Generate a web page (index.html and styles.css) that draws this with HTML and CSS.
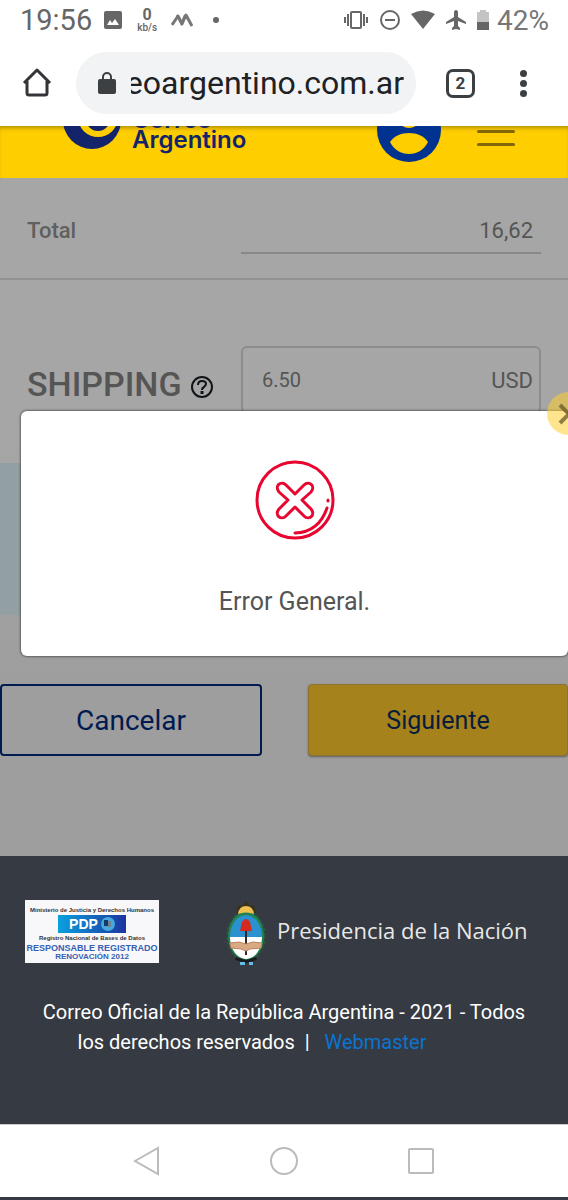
FILE: index.html
```html
<!DOCTYPE html>
<html lang="es">
<head>
<meta charset="UTF-8" />
<meta name="viewport" content="width=device-width, initial-scale=1" />
<title>Correo Argentino</title>
<link rel="stylesheet" href="styles.css">
</head>
<body>

  <div class="status">
    <span class="clock">19:56</span>
    <svg class="pic" width="18" height="18" viewBox="0 0 18 18"><rect width="18" height="18" rx="2" fill="#666"/><path d="M3 14l3-5 2 3 3-4 4 6z" fill="#fff"/></svg>
    <span class="speed"><b>0</b><small>kb/s</small></span>
    <svg class="wave" width="22" height="14" viewBox="0 0 22 14"><path d="M1 12L7 3l4 8 4-9 6 11" fill="none" stroke="#777" stroke-width="3" stroke-linejoin="round"/><path d="M6 2l5 10M14 2l-4 9" stroke="#777" stroke-width="2"/></svg>
    <span class="dot"></span>
    <div class="status-right">
      <svg width="26" height="20" viewBox="0 0 26 20" fill="none" stroke="#666" stroke-width="2"><rect x="8" y="2" width="10" height="16" rx="1"/><path d="M5 4v12M2 7v6M21 4v12M24 7v6"/></svg>
      <svg width="20" height="20" viewBox="0 0 20 20" fill="none" stroke="#666" stroke-width="2"><circle cx="10" cy="10" r="9"/><path d="M5 10h10"/></svg>
      <svg width="24" height="20" viewBox="0 0 24 20"><path d="M0 4Q12-3 24 4L12 19z" fill="#666"/></svg>
      <svg width="20" height="22" viewBox="0 0 20 22"><path d="M10 1c1 0 2 1 2 2v5l8 5v2l-8-3v5l2 2v2l-4-1-4 1v-2l2-2v-5l-8 3v-2l8-5V3c0-1 1-2 2-2z" fill="#666"/></svg>
      <svg width="12" height="22" viewBox="0 0 12 22"><path d="M3 1h6v2h3v10H0V3h3z" fill="#c4c4c4"/><path d="M0 13h12v8H0z" fill="#666"/></svg>
      <span class="battery">42%</span>
    </div>
  </div>

  <div class="toolbar">
    <button class="icon-btn" aria-label="Inicio">
      <svg width="30" height="30" viewBox="0 0 30 30" fill="none" stroke="#333538" stroke-width="3" stroke-linejoin="round"><path d="M2 15L15 2l13 13M5 13v12q0 2 2 2h16q2 0 2-2V13"/></svg>
    </button>
    <div class="address">
      <svg width="18" height="24" viewBox="0 0 18 24"><rect y="8" width="18" height="15" rx="2" fill="#3c4043"/><path d="M5 9V6a4 4 0 0 1 8 0v3" fill="none" stroke="#3c4043" stroke-width="2"/></svg>
      <div class="url"><span>correoargentino.com.ar</span></div>
    </div>
    <button class="tabs">2</button>
    <button class="icon-btn more" aria-label="Menú"><i></i><i></i><i></i></button>
  </div>

  <header class="header">
    <a class="brand" href="#">
      <svg width="58" height="60" viewBox="0 0 58 60"><circle cx="29" cy="30" r="29" fill="#13246a"/><circle cx="35" cy="27" r="20" fill="#ffce00"/><circle cx="35" cy="29" r="12" fill="#13246a"/></svg>
      <span>Correo<br>Argentino</span>
    </a>
    <button class="user" aria-label="Usuario">
      <svg width="64" height="64" viewBox="0 0 64 64"><circle cx="32" cy="32" r="32" fill="#00338f"/><circle cx="32" cy="18" r="12" fill="#ffce00"/><path d="M13 44C17 38 24 35 32 35s15 3 19 9c-4 8-11 12-19 12s-15-4-19-12z" fill="#ffce00"/></svg>
    </button>
    <button class="burger" aria-label="Navegación"><i></i><i></i><i></i></button>
  </header>

  <main class="content">
    <div class="row total">
      <label for="total">Total</label>
      <input id="total" class="line-input" type="text" value="16,62" readonly>
    </div>

    <div class="row shipping">
      <label for="shipping">SHIPPING
        <svg width="22" height="22" viewBox="0 0 22 22" fill="none" stroke="#111417" stroke-width="2"><circle cx="11" cy="11" r="10"/><path d="M7 9q0-4 4-4t4 3q0 1-2 3-2 1-2 3" stroke-width="2"/><path d="M11 15v3" stroke-width="3"/></svg>
      </label>
      <div class="money">
        <input id="shipping" type="text" value="6.50">
        <span>USD</span>
      </div>
    </div>

    <div class="info"></div>

    <div class="actions">
      <button class="btn cancel">Cancelar</button>
      <button class="btn next">Siguiente</button>
    </div>

    <div class="modal" role="dialog" aria-labelledby="modalText">
      <button class="close" aria-label="Cerrar">
        <svg width="24" height="24" viewBox="0 0 24 24"><path d="M3 3l18 18M21 3L3 21" stroke="#5f5124" stroke-opacity=".7" stroke-width="4"/></svg>
      </button>
      <svg width="80" height="80" viewBox="0 0 80 80" fill="none" stroke="#e8052f" stroke-width="3" stroke-linecap="round" stroke-linejoin="round">
        <circle cx="40" cy="40" r="38"/>
        <path d="M40 34l9-9c5-5 12 1 7 7l-9 8 9 9c5 6-2 12-7 7l-9-9-9 9c-5 5-12-1-7-7l9-9-9-8c-5-6 2-12 7-7z"/>
        <path d="M40 73q24-1 32-25M73 40v1"/>
      </svg>
      <p id="modalText">Error General.</p>
    </div>
  </main>

  <footer class="footer">
    <div class="logos">
      <a class="pdp" href="#">
        <span class="pdp-small">Ministerio de Justicia y Derechos Humanos</span>
        <span class="pdp-bar">PDP<svg width="14" height="14" viewBox="0 0 14 14"><circle cx="7" cy="7" r="7" fill="#4aa9dc"/><path d="M3 3h4v6H3z" fill="#173a66"/><path d="M7 4h3v6H7z" fill="#6b8396"/></svg></span>
        <span class="pdp-small">Registro Nacional de Bases de Datos</span>
        <span class="pdp-blue">RESPONSABLE REGISTRADO</span>
        <span class="pdp-blue pdp-year">RENOVACIÓN 2012</span>
      </a>
      <a class="nation" href="#">
        <svg width="40" height="66" viewBox="0 0 40 66">
          <path d="M10 13l2-8 4 1 4-5 4 5 4-1 2 8z" fill="#3b3020"/>
          <ellipse cx="20" cy="36" rx="18" ry="24" fill="#218451"/>
          <ellipse cx="20" cy="36" rx="19" ry="25" fill="none" stroke="#1b6d43" stroke-dasharray="3 2"/>
          <path d="M12 14q1-8 8-8t8 8q-8-3-16 0z" fill="#edc150"/>
          <path d="M4 37a16 22 0 0 1 32 0z" fill="#2b91d0"/>
          <path d="M4 37a16 22 0 0 0 32 0z" fill="#fff"/>
          <path d="M20 27v28" stroke="#33251d" stroke-width="2"/>
          <path d="M14 31l2-9q4-6 8 0l2 9z" fill="#d62a20"/>
          <path d="M4 43l9-1 7 2 7-2 9 1-1 5-11 1-4 2-5-2-10-1z" fill="#d9a982" stroke="#b98461"/>
          <path d="M10 57l10 3 10-3 1 3-11 3-11-3z" fill="#181b20"/>
          <path d="M14 62h5v3h-5zM23 62h4v3h-4z" fill="#64bce4"/>
        </svg>
        <span>Presidencia de la Nación</span>
      </a>
    </div>
    <p>Correo Oficial de la República Argentina - 2021 - Todos los derechos reservados &nbsp;|&nbsp;&nbsp; <a href="#">Webmaster</a></p>
  </footer>

  <nav class="navbar">
    <button aria-label="Atrás"><svg width="28" height="30" viewBox="0 0 28 30"><path d="M2 15L25 2v26z"/></svg></button>
    <button aria-label="Inicio"><svg width="28" height="30" viewBox="0 0 28 30"><circle cx="14" cy="15" r="13"/></svg></button>
    <button aria-label="Recientes"><svg width="28" height="30" viewBox="0 0 28 30"><rect x="2" y="3" width="24" height="24" rx="1"/></svg></button>
  </nav>

</body>
</html>
```
FILE: styles.css
```css
* {
  box-sizing: border-box;
}
body {
  margin: 0;
  font-family: Roboto, "Liberation Sans", sans-serif;
  background: #fff;
  color: #555;
  overflow-x: hidden;
}
button {
  font-family: inherit;
  border: none;
  background: none;
  padding: 0;
  cursor: pointer;
}
input {
  font-family: inherit;
  border: none;
  background: none;
  color: #555;
  min-width: 0;
}
svg {
  display: block;
  flex-shrink: 0;
}

/* barra de estado */
.status {
  display: flex;
  align-items: center;
  height: 40px;
  padding: 0 19px 0 20px;
  color: #666;
}
.clock {
  font-size: 29px;
}
.pic {
  margin-left: 12px;
}
.speed {
  display: flex;
  flex-direction: column;
  align-items: center;
  margin-left: 15px;
  font-weight: 500;
}
.speed b {
  font-size: 16px;
  line-height: 16px;
}
.speed small {
  font-size: 10px;
  line-height: 10px;
}
.wave {
  margin-left: 14px;
}
.dot {
  width: 6px;
  height: 6px;
  margin-left: 20px;
  border-radius: 50%;
  background: #666;
}
.status-right {
  display: flex;
  align-items: center;
  gap: 11px;
  margin-left: auto;
}
.battery {
  margin-left: -3px;
  font-size: 28px;
  color: #777;
}

/* navegador */
.toolbar {
  display: flex;
  align-items: center;
  height: 86px;
  padding: 0 30px 0 22px;
}
.icon-btn {
  width: 30px;
}
.address {
  display: flex;
  flex: 1;
  align-items: center;
  gap: 15px;
  min-width: 0;
  height: 62px;
  margin: 0 30px 0 24px;
  padding: 0 12px 0 22px;
  border-radius: 31px;
  background: #f1f3f4;
}
.url {
  display: flex;
  flex: 1;
  justify-content: flex-end;
  overflow: hidden;
  font-size: 32px;
  line-height: 40px;
  color: #202124;
}
.tabs {
  width: 29px;
  height: 29px;
  border: 3px solid #3c4043;
  border-radius: 7px;
  font-size: 17px;
  font-weight: 700;
  color: #3c4043;
}
.more {
  display: flex;
  flex-direction: column;
  align-items: center;
  gap: 3px;
  margin-left: 33px;
}
.more i {
  width: 7px;
  height: 7px;
  border-radius: 50%;
  background: #3c4043;
}

/* encabezado */
.header {
  display: flex;
  align-items: flex-end;
  height: 52px;
  padding: 0 53px 16px 63px;
  overflow: hidden;
  background: #ffce00;
  box-shadow: inset 0 4px 4px -2px rgba(0, 0, 0, 0.3);
}
.brand {
  display: flex;
  align-items: flex-end;
  gap: 11px;
  margin-bottom: 12px;
  font-family: Inter, Roboto, sans-serif;
  font-size: 24px;
  font-weight: 600;
  line-height: 20px;
  color: #13246a;
  text-decoration: none;
}
.user {
  margin-left: auto;
}
.burger {
  display: flex;
  flex-direction: column;
  gap: 10px;
  margin: 0 0 16px 36px;
}
.burger i {
  width: 38px;
  height: 3px;
  border-radius: 2px;
  background: #80670a;
}

/* formulario */
.content {
  position: relative;
  padding-bottom: 100px;
  background: linear-gradient(#a6a6a6 0, #a6a6a6 40%, #9e9e9e 75%);
}
.row {
  display: flex;
  padding: 0 27px;
}
.row label {
  flex: 1;
}
.total {
  height: 102px;
  padding-top: 30px;
  border-bottom: 2px solid #929292;
}
.total label {
  font-size: 22px;
  font-weight: 500;
  line-height: 46px;
  color: #606060;
}
.line-input {
  width: 300px;
  height: 46px;
  padding: 0 8px;
  border-bottom: 2px solid #888;
  font-size: 22px;
  text-align: right;
}
.shipping {
  padding-top: 66px;
}
.shipping label {
  display: flex;
  align-items: center;
  gap: 9px;
  height: 76px;
  font-size: 34px;
  font-weight: 500;
}
.shipping label svg {
  margin-top: 6px;
}
.money {
  display: flex;
  align-items: center;
  width: 300px;
  height: 68px;
  padding: 0 6px 0 17px;
  border: 2px solid #8c8c8c;
  border-radius: 6px;
  font-size: 22px;
}
.money input {
  flex: 1;
  font-size: 20px;
}
.info {
  height: 152px;
  margin-top: 41px;
  background: #929fa3;
}
.actions {
  display: flex;
  gap: 46px;
  padding-top: 69px;
}
.btn {
  flex: 1;
  height: 72px;
  border-radius: 4px;
  color: #001b50;
}
.cancel {
  border: 2px solid #001b50;
  font-size: 28px;
}
.next {
  border: 1px solid #8e7430;
  background: #a5821b;
  box-shadow: 0 1px 2px rgba(0, 0, 0, 0.4);
  font-size: 25px;
  color: #071d3c;
}

/* aviso de error */
.modal {
  position: absolute;
  top: 233px;
  left: 21px;
  right: 0;
  display: flex;
  flex-direction: column;
  align-items: center;
  height: 245px;
  padding-top: 49px;
  border-radius: 6px;
  background: #fff;
  box-shadow: 0 0 2px 1px rgba(0, 0, 0, 0.4);
}
.modal p {
  margin: 46px 0 0;
  font-size: 25px;
  line-height: 32px;
}
.close {
  position: absolute;
  top: -19px;
  right: -22px;
  display: flex;
  align-items: center;
  justify-content: center;
  width: 43px;
  height: 43px;
  border-radius: 50%;
  background: rgba(255, 206, 50, 0.55);
}

/* pie */
.footer {
  min-height: 268px;
  padding: 44px 25px 0;
  background: #363a42;
  color: #fff;
}
.logos {
  display: flex;
  gap: 67px;
}
.footer a {
  text-decoration: none;
}
.pdp {
  display: flex;
  flex-direction: column;
  align-items: center;
  width: 134px;
  height: 63px;
  padding-top: 5px;
  background: #f8f8fa;
  font-family: "Liberation Sans", sans-serif;
  white-space: nowrap;
}
.pdp-small {
  font-size: 6px;
  font-weight: 700;
  line-height: 10px;
  color: #333;
}
.pdp-bar {
  display: flex;
  align-items: center;
  justify-content: center;
  gap: 3px;
  width: 68px;
  height: 18px;
  background: linear-gradient(90deg, #0ba0df, #1d35a0);
  font-size: 14px;
  font-weight: 700;
  color: #fff;
}
.pdp-blue {
  font-size: 9px;
  font-weight: 700;
  line-height: 10px;
  color: #3560b4;
}
.pdp-year {
  font-size: 8px;
  line-height: 8px;
}
.nation {
  display: flex;
  align-items: center;
  gap: 11px;
  font-family: "Open Sans", "Noto Sans", sans-serif;
  font-size: 22px;
  color: #e8e8e8;
  white-space: nowrap;
}
.nation span {
  padding-bottom: 6px;
}
.footer p {
  margin: 31px 0 0;
  padding: 0 10px;
  font-size: 20px;
  line-height: 30px;
  text-align: center;
}
.footer p a {
  padding-right: 64px;
  color: #0b74d1;
}

/* barra de navegación */
.navbar {
  display: flex;
  justify-content: center;
  gap: 109px;
  height: 76px;
  border-top: 1px solid #ccc;
  border-bottom: 3px solid #363a42;
}
.navbar svg {
  fill: none;
  stroke: #bbb;
  stroke-width: 2;
}
```
